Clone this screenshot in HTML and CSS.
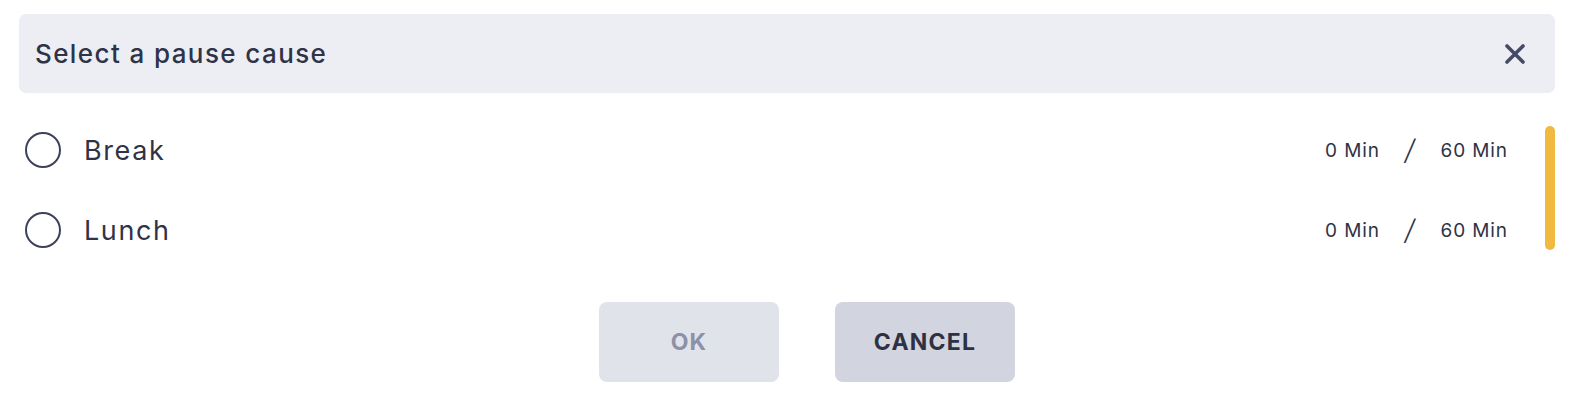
FILE: index.html
```html
<!DOCTYPE html>
<html lang="en">
<head>
<meta charset="utf-8">
<title>Select a pause cause</title>
<link rel="stylesheet" href="styles.css">
</head>
<body>
<div class="dialog">
  <div class="header">
    <div class="title">Select a pause cause</div>
    <button class="close" aria-label="Close">
      <svg width="20" height="20" viewBox="0 0 20 20"><path d="M2 2 L18 18 M18 2 L2 18" stroke="#464b65" stroke-width="3.6" stroke-linecap="round"/></svg>
    </button>
  </div>
  <div class="body">
    <div class="list">
      <label class="row">
        <span class="radio"></span>
        <span class="name">Break</span>
        <span class="times"><span class="used">0 Min</span><span class="slash">/</span><span class="max">60 Min</span></span>
      </label>
      <label class="row">
        <span class="radio"></span>
        <span class="name">Lunch</span>
        <span class="times"><span class="used">0 Min</span><span class="slash">/</span><span class="max">60 Min</span></span>
      </label>
    </div>
    <div class="scrollbar"></div>
  </div>
  <div class="actions">
    <button class="btn btn-ok">OK</button>
    <button class="btn btn-cancel">CANCEL</button>
  </div>
</div>
</body>
</html>
```
FILE: styles.css
```css
* { box-sizing: border-box; }
html, body { margin: 0; padding: 0; background: #ffffff; }
body {
  font-family: "Inter", "Noto Sans", sans-serif;
  color: #2f3347;
}
.dialog {
  padding: 14px 15px 0 19px;
}
.header {
  height: 79px;
  background: #edeef3;
  border-radius: 7px;
  display: flex;
  align-items: center;
  justify-content: space-between;
  padding: 0 30px 0 16px;
}
.title {
  font-size: 26px;
  font-weight: 500;
  letter-spacing: 1.4px;
  color: #2f3347;
}
.close {
  border: 0;
  background: transparent;
  padding: 0;
  width: 20px;
  height: 20px;
  display: flex;
}
.body {
  display: flex;
  padding-top: 17px;
}
.list {
  flex: 1;
  display: flex;
  flex-direction: column;
}
.row {
  height: 80px;
  display: flex;
  align-items: center;
  padding-left: 6px;
  padding-right: 37px;
}
.radio {
  width: 36px;
  height: 36px;
  border: 2px solid #3d4259;
  border-radius: 50%;
  flex: none;
}
.name {
  margin-left: 23px;
  font-size: 27px;
  font-weight: 400;
  letter-spacing: 1.6px;
  flex: 1;
  color: #2f3347;
}
.times {
  display: flex;
  align-items: center;
  font-size: 19px;
  letter-spacing: 0.9px;
  color: #2f3347;
}
.slash {
  font-size: 28px;
  margin: 0 25px 0 25px;
  font-weight: 300;
  font-style: italic;
}
.scrollbar {
  width: 10px;
  height: 124px;
  margin-top: 16px;
  background: #f0b940;
  border-radius: 5px;
  flex: none;
}
.actions {
  display: flex;
  justify-content: center;
  gap: 56px;
  padding-left: 40px;
  margin-top: 32px;
}
.btn {
  width: 180px;
  height: 80px;
  border: 0;
  border-radius: 8px;
  font-family: "Inter", "Noto Sans", sans-serif;
  font-size: 23px;
  font-weight: 700;
  letter-spacing: 1.2px;
}
.btn-ok {
  background: #e1e3ea;
  color: #8c90a8;
}
.btn-cancel {
  background: #d2d4df;
  color: #2e3142;
}
```
